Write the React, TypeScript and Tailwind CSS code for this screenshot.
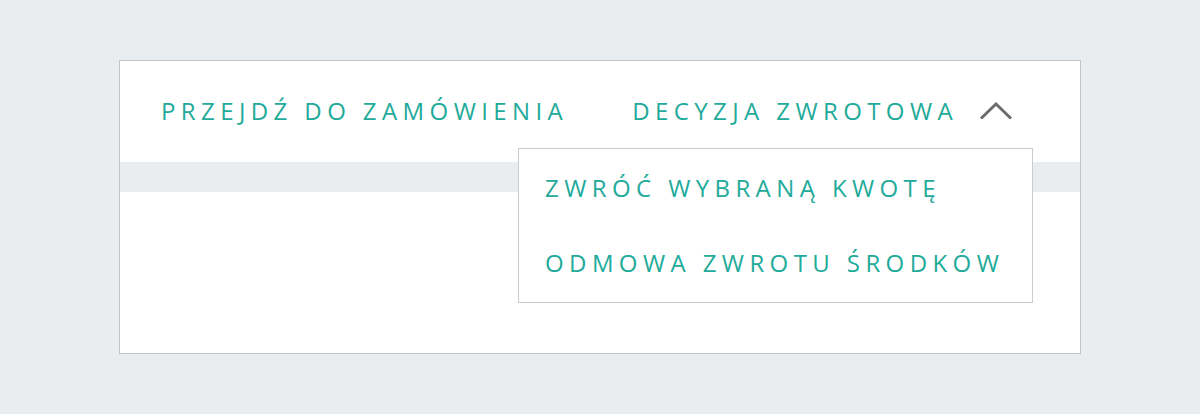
import React from 'react';

const teal = 'text-[#22aa9a]';

function ChevronUp() {
  return (
    <svg width="34" height="20" viewBox="0 0 34 20" className="ml-[21px]">
      <path d="M2 17.5 L17 3 L32 17.5" fill="none" stroke="#6b6b6b" strokeWidth="3" />
    </svg>
  );
}

export default function App() {
  return (
    <div className="h-[414px] w-full bg-[#eaedf0] pt-[60px] pl-[119px]" style={{ fontFamily: '"Open Sans", sans-serif' }}>
      <div className="relative h-[294px] w-[962px] border border-[#c4c4c4] bg-white">
        <div className="flex h-[101px] items-center pl-[41px] pb-[2px]">
          <a className={`${teal} text-[24px] uppercase tracking-[5.4px]`}>Przejdź do zamówienia</a>
          <div className="ml-[64px] flex items-center">
            <span className={`${teal} text-[24px] uppercase tracking-[5.4px]`}>Decyzja zwrotowa</span>
            <ChevronUp />
          </div>
        </div>
        <div className="h-[30px] bg-[#eaedf0]" />

        <div className="absolute left-[398px] top-[87px] w-[515px] border border-[#cccccc] bg-white py-[13px]">
          <div className={`${teal} flex h-[52px] items-center pl-[26px] text-[24px] uppercase tracking-[5.4px]`}>
            Zwróć wybraną kwotę
          </div>
          <div className="h-[23px]" />
          <div className={`${teal} flex h-[52px] items-center pl-[26px] text-[24px] uppercase tracking-[5.4px]`}>
            Odmowa zwrotu środków
          </div>
        </div>
      </div>
    </div>
  );
}
